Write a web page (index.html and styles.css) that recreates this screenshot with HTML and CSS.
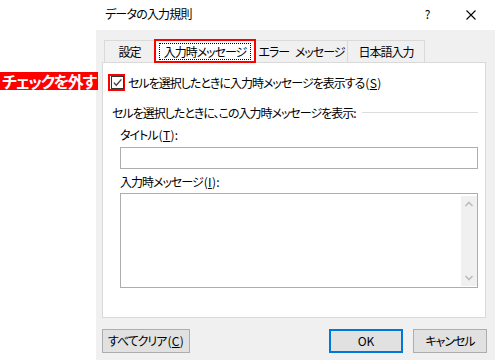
FILE: index.html
```html
<!DOCTYPE html>
<html lang="ja">
<head>
<meta charset="utf-8">
<title>データの入力規則</title>
<link rel="stylesheet" href="styles.css">
</head>
<body>
<div class="window">
  <header class="titlebar">
    <span class="title">データの入力規則</span>
    <span class="help">?</span>
    <span class="close"><svg width="10" height="10" viewBox="0 0 10 10"><path d="M0.5 0.5 L9.5 9.5 M9.5 0.5 L0.5 9.5" stroke="#000" stroke-width="1.1" fill="none"/></svg></span>
  </header>
  <div class="main">
    <div class="gutter"></div>
    <div class="dialog">
      <div class="tabs">
        <div class="tab tab-1">設定</div>
        <div class="tab tab-active"><span class="focus">入力時メッセージ</span></div>
        <div class="tab tab-3">エラー メッセージ</div>
        <div class="tab tab-4">日本語入力</div>
      </div>
      <div class="panel">
        <div class="check-row">
          <span class="mark-box"><span class="checkbox"><svg width="11" height="11" viewBox="0 0 11 11"><path d="M1.8 5.6 L4.3 8.2 L9.4 2.4" stroke="#3c3c3c" stroke-width="1.3" fill="none"/></svg></span></span>
          <span class="check-label">セルを選択したときに入力時メッセージを表示する<span class="acc">(<u>S</u>)</span></span>
        </div>
        <div class="group-head">
          <span class="group-title">セルを選択したときに、この入力時メッセージを表示:</span>
          <span class="rule"></span>
        </div>
        <div class="field-label label-title">タイトル<span class="acc">(<u>T</u>):</span></div>
        <div class="input"></div>
        <div class="field-label label-msg">入力時メッセージ<span class="acc">(<u>I</u>):</span></div>
        <div class="textarea">
          <div class="scrollbar">
            <span class="arrow"><svg width="10" height="6" viewBox="0 0 10 6"><path d="M1.5 5 L5 1.5 L8.5 5" stroke="#bdbdbd" stroke-width="1.6" fill="none"/></svg></span>
            <span class="arrow"><svg width="10" height="6" viewBox="0 0 10 6"><path d="M1.5 1 L5 4.5 L8.5 1" stroke="#bdbdbd" stroke-width="1.6" fill="none"/></svg></span>
          </div>
        </div>
      </div>
      <div class="buttons">
        <button class="btn btn-clear">すべてクリア<span class="acc">(<u>C</u>)</span></button>
        <span class="spacer"></span>
        <button class="btn btn-ok">OK</button>
        <button class="btn btn-cancel">キャンセル</button>
      </div>
    </div>
  </div>
  <div class="callout">チェックを外す</div>
</div>
</body>
</html>
```

FILE: styles.css
```css
* { box-sizing: border-box; }
html, body { margin: 0; padding: 0; }
body {
  width: 495px;
  height: 361px;
  overflow: hidden;
  background: #fff;
  color: #000;
  font-family: "Noto Sans CJK JP", "Noto Sans", sans-serif;
  font-size: 12px;
  letter-spacing: -1px;
  font-feature-settings: "palt";
}
u { text-decoration: underline; text-underline-offset: 1px; }
.acc { letter-spacing: 0.3px; margin-left: 1px; }

.window {
  position: relative;
  width: 495px;
  height: 361px;
  display: flex;
  flex-direction: column;
}

.titlebar {
  height: 30px;
  flex: none;
  display: flex;
  align-items: center;
  padding-left: 105px;
  padding-right: 19px;
}
.title { line-height: 16px; margin-top: -2px; letter-spacing: -0.8px; }
.help {
  margin-left: auto;
  width: 7px;
  text-align: center;
  line-height: 16px;
  margin-top: -2px;
  letter-spacing: 0;
}
.close { margin-left: 35px; display: flex; margin-top: -1px; }

.main { display: flex; flex: 1; align-items: flex-start; }
.gutter { width: 96px; flex: none; }

.dialog {
  flex: 1;
  height: 330px;
  background: #f0f0f0;
  padding: 8px 8px 7px 6px;
  display: flex;
  flex-direction: column;
}

.tabs {
  display: flex;
  align-items: flex-end;
  height: 24px;
  flex: none;
  margin-left: 2px;
  position: relative;
  z-index: 1;
}
.tab {
  height: 22px;
  border: 1px solid #d9d9d9;
  border-bottom: none;
  text-align: center;
  line-height: 21px;
  white-space: nowrap;
}
.tab-1 { width: 51px; margin-right: -1px; }
.tab-active {
  width: 102px;
  height: 24px;
  margin-bottom: -1px;
  background: #fff;
  border: 2px solid #ff0000;
  padding: 2px 3px 1px 3px;
  position: relative;
  z-index: 2;
}
.focus {
  display: block;
  height: 100%;
  border: 1px dotted #000;
  line-height: 16px;
}
.tab-3 { width: 93px; margin-left: -1px; word-spacing: 4px; }
.tab-4 { width: 78px; margin-left: -1px; }

.panel {
  flex: none;
  height: 256px;
  margin-right: 1px;
  background: #fff;
  border: 1px solid #d9d9d9;
  display: flex;
  flex-direction: column;
}

.check-row {
  display: flex;
  align-items: center;
  height: 17px;
  margin-top: 11px;
  margin-left: 5px;
}
.mark-box {
  width: 17px;
  height: 17px;
  border: 2px solid #ff0000;
  padding: 0 0 0 1px;
  display: flex;
  align-items: center;
}
.checkbox {
  width: 13px;
  height: 13px;
  border: 1px solid #333;
  background: #fff;
  display: flex;
  align-items: center;
  justify-content: center;
}
.check-label { margin-left: 3px; line-height: 16px; }

.group-head {
  display: flex;
  align-items: center;
  height: 16px;
  margin: 14px 7px 0 9px;
}
.group-title { line-height: 16px; white-space: nowrap; }
.rule {
  flex: 1;
  height: 1px;
  background: #dcdcdc;
  margin-left: 6px;
  margin-top: -1px;
}

.field-label {
  line-height: 16px;
  margin-left: 17px;
}
.label-title { margin-top: 6px; }
.label-msg { margin-top: 5px; }

.input {
  height: 22px;
  margin: 4px 7px 0 17px;
  border: 1px solid #adadad;
  background: #fff;
}

.textarea {
  height: 95px;
  margin: 3px 7px 0 17px;
  border: 1px solid #adadad;
  background: #fff;
  display: flex;
  justify-content: flex-end;
}
.scrollbar {
  width: 16px;
  margin: 2px 0 1px 0;
  background: #f0f0f0;
  display: flex;
  flex-direction: column;
  justify-content: space-between;
}
.arrow {
  height: 16px;
  display: flex;
  align-items: center;
  justify-content: center;
}

.buttons {
  display: flex;
  height: 24px;
  margin-top: 11px;
  flex: none;
}
.spacer { flex: 1; }
.btn {
  height: 24px;
  margin: 0;
  padding: 0;
  background: #e1e1e1;
  border: 1px solid #adadad;
  font-family: inherit;
  font-size: 12px;
  letter-spacing: -1px;
  font-feature-settings: "palt";
  color: #000;
  line-height: 20px;
}
.btn-clear { width: 88px; }
.btn-ok { width: 74px; border: 2px solid #0078d7; letter-spacing: 0; }
.btn-cancel { width: 74px; margin-left: 10px; }

.callout {
  position: absolute;
  left: 0;
  top: 72px;
  width: 98px;
  height: 18px;
  background: #ff0000;
  color: #fff;
  font-weight: bold;
  font-size: 16px;
  letter-spacing: -1.3px;
  line-height: 18px;
  padding-left: 2px;
  white-space: nowrap;
}
```
